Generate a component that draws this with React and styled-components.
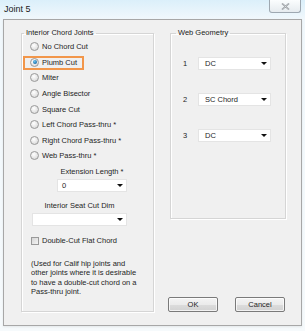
import React from "react";
import styled, { createGlobalStyle } from "styled-components";

const GlobalStyle = createGlobalStyle`
  html, body {
    margin: 0;
    padding: 0;
  }
  body {
    width: 305px;
    height: 331px;
    overflow: hidden;
    background: #f6fafc;
    font-family: "Liberation Sans", Arial, sans-serif;
    color: #1e1e1e;
  }
`;

const Window = styled.div`
  width: 305px;
  height: 331px;
  display: flex;
  flex-direction: column;
  box-sizing: border-box;
  background: linear-gradient(#dbeffa 0, #f1f8fc 19px, #f6fafc 100%);
`;

const TitleBar = styled.div`
  height: 19px;
  flex: none;
  display: flex;
  align-items: flex-start;
  justify-content: space-between;
  padding: 0 4px 0 4px;
  box-sizing: border-box;
`;

const Title = styled.span`
  font-size: 9px;
  line-height: 9px;
  margin-top: 5px;
  color: #1a1a1a;
`;

const CloseButton = styled.div`
  width: 32px;
  height: 13px;
  box-sizing: border-box;
  border: 1px solid #9ea8b1;
  border-top: none;
  border-radius: 0 0 3px 3px;
  background: linear-gradient(#fbfdfe, #e6ebef);
  display: flex;
  align-items: center;
  justify-content: center;
`;

const Frame = styled.div`
  flex: 1;
  margin: 0 3px 5px 3px;
  border: 1px solid #a7a7a7;
  background: #f0f0f0;
  display: grid;
  grid-template-columns: 133px 116px;
  column-gap: 16px;
  padding: 8px 15px 13px 17px;
  box-sizing: border-box;
  box-shadow: 0 1px 2px rgba(0, 0, 0, 0.08);
`;

const Group = styled.fieldset`
  margin: 0;
  min-width: 0;
  border: 1px solid #d5d5d5;
  box-shadow: inset 1px 1px 0 #ffffff, 1px 1px 0 #ffffff;
  padding: ${(p) => p.$pad};
  box-sizing: border-box;
  display: flex;
  flex-direction: column;
  height: ${(p) => p.$height || "auto"};
`;

const Legend = styled.legend`
  font-size: 7.5px;
  line-height: 10px;
  padding: 0 2px;
  margin-left: ${(p) => p.$shift};
  color: #222;
`;

const RadioRow = styled.div`
  position: relative;
  height: 15.6px;
  display: flex;
  align-items: center;
  font-size: 7.5px;
`;

const RadioDot = styled.span`
  width: 9px;
  height: 9px;
  flex: none;
  box-sizing: border-box;
  border-radius: 50%;
  border: 1px solid #9a9a9a;
  background: radial-gradient(circle at 40% 35%, #ffffff 0, #e4e4e4 60%, #cfcfcf 100%);
  margin-right: 3px;
  display: flex;
  align-items: center;
  justify-content: center;

  &::after {
    content: "";
    display: ${(p) => (p.$checked ? "block" : "none")};
    width: 4px;
    height: 4px;
    border-radius: 50%;
    background: radial-gradient(circle at 40% 35%, #6ec6f0 0, #1b6fae 70%);
  }
`;

const Highlight = styled.span`
  position: absolute;
  left: -7px;
  top: 1px;
  width: 61px;
  height: 14px;
  box-sizing: border-box;
  border: 2px solid #f2964a;
`;

const FieldBlock = styled.div`
  display: flex;
  flex-direction: column;
  align-items: center;
  width: ${(p) => p.$width};
  margin-left: ${(p) => p.$left};
  margin-top: ${(p) => p.$top};
`;

const FieldLabel = styled.span`
  font-size: 7.5px;
  line-height: 10px;
  margin-bottom: 2px;
`;

const Select = styled.div`
  width: ${(p) => p.$width || "100%"};
  height: 13px;
  box-sizing: border-box;
  background: #ffffff;
  border: 1px solid #e4e4e4;
  display: flex;
  align-items: center;
  justify-content: space-between;
  padding: 0 3px 0 ${(p) => p.$padLeft || "4px"};
  font-size: 7.5px;
  color: #1e1e1e;
`;

const Arrow = styled.span`
  width: 0;
  height: 0;
  border-left: 3px solid transparent;
  border-right: 3px solid transparent;
  border-top: 3px solid #111;
`;

const CheckRow = styled.div`
  display: flex;
  align-items: center;
  height: 10px;
  margin: 10px 0 0 1px;
  font-size: 7.5px;
`;

const CheckBox = styled.span`
  width: 8px;
  height: 8px;
  box-sizing: border-box;
  border: 1px solid #9a9a9a;
  background: linear-gradient(135deg, #d6d6d6, #f4f4f4);
  margin-right: 3px;
`;

const Note = styled.p`
  margin: 13px 0 0 1px;
  font-size: 7.5px;
  line-height: 9.4px;
  white-space: nowrap;
  color: #1e1e1e;
`;

const RightColumn = styled.div`
  display: flex;
  flex-direction: column;
  justify-content: space-between;
`;

const GeoRow = styled.div`
  display: flex;
  align-items: center;
  height: 13px;
  margin-bottom: 23px;
  font-size: 7.5px;
`;

const GeoNum = styled.span`
  width: 15px;
  flex: none;
`;

const ButtonRow = styled.div`
  display: flex;
  gap: 17px;
  margin-left: -2px;
`;

const Button = styled.button`
  width: 50px;
  height: 15px;
  padding: 0;
  border: 1px solid #7a7a7a;
  border-radius: 2px;
  background: linear-gradient(#f4f4f4 0, #ebebeb 50%, #dcdcdc 51%, #d2d2d2 100%);
  box-shadow: inset 0 0 0 1px rgba(255, 255, 255, 0.7);
  font-family: "Liberation Sans", Arial, sans-serif;
  font-size: 7.5px;
  color: #1e1e1e;
`;

const chordOptions = [
  "No Chord Cut",
  "Plumb Cut",
  "Miter",
  "Angle Bisector",
  "Square Cut",
  "Left Chord Pass-thru *",
  "Right Chord Pass-thru *",
  "Web Pass-thru *",
];

const webRows = [
  { num: "1", value: "DC" },
  { num: "2", value: "SC Chord" },
  { num: "3", value: "DC" },
];

function CloseIcon() {
  return (
    <svg width="9" height="7" viewBox="0 0 9 7" aria-hidden="true">
      <path d="M1 0.5 L8 6.5 M8 0.5 L1 6.5" stroke="#8a8f94" strokeWidth="1.6" fill="none" />
      <path d="M1 0.5 L8 6.5 M8 0.5 L1 6.5" stroke="#f4f6f8" strokeWidth="0.5" fill="none" />
    </svg>
  );
}

export default function App() {
  return (
    <>
      <GlobalStyle />
      <Window>
        <TitleBar>
          <Title>Joint 5</Title>
          <CloseButton>
            <CloseIcon />
          </CloseButton>
        </TitleBar>
        <Frame>
          <Group $pad="1px 4px 0 8px">
            <Legend $shift="-6px">Interior Chord Joints</Legend>
            {chordOptions.map((label, i) => (
              <RadioRow key={label}>
                <RadioDot $checked={i === 1} />
                {label}
                {i === 1 && <Highlight />}
              </RadioRow>
            ))}
            <FieldBlock $width="70px" $left="27px" $top="3px">
              <FieldLabel>Extension Length *</FieldLabel>
              <Select>
                0
                <Arrow />
              </Select>
            </FieldBlock>
            <FieldBlock $width="95px" $left="2px" $top="9px">
              <FieldLabel>Interior Seat Cut Dim</FieldLabel>
              <Select>
                <span />
                <Arrow />
              </Select>
            </FieldBlock>
            <CheckRow>
              <CheckBox />
              Double-Cut Flat Chord
            </CheckRow>
            <Note>
              (Used for Calif hip joints and
              <br />
              other joints where it is desirable
              <br />
              to have a double-cut chord on a
              <br />
              Pass-thru joint.
            </Note>
          </Group>
          <RightColumn>
            <Group $pad="19px 4px 0 12px" $height="191px">
              <Legend $shift="-7px">Web Geometry</Legend>
              {webRows.map((row) => (
                <GeoRow key={row.num}>
                  <GeoNum>{row.num}</GeoNum>
                  <Select $width="73px" $padLeft="6px">
                    {row.value}
                    <Arrow />
                  </Select>
                </GeoRow>
              ))}
            </Group>
            <ButtonRow>
              <Button>OK</Button>
              <Button>Cancel</Button>
            </ButtonRow>
          </RightColumn>
        </Frame>
      </Window>
    </>
  );
}
